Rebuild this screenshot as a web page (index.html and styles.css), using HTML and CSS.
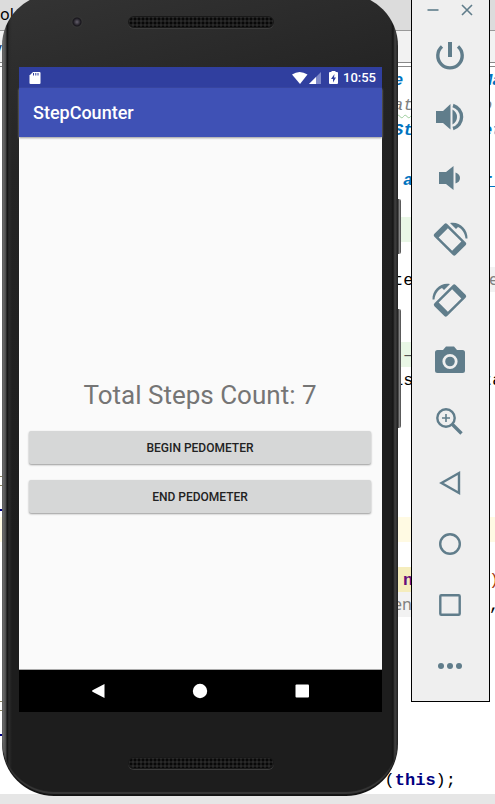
FILE: index.html
```html
<!DOCTYPE html>
<html lang="en">
<head>
<meta charset="utf-8">
<meta name="viewport" content="width=device-width, initial-scale=1">
<title>StepCounter</title>
<link rel="stylesheet" href="styles.css">
</head>
<body>
<div class="desktop">
  <div class="editor">
    <div class="tabs">ol</div>
    <div class="crumbs"><span class="crumb-text">v</span></div>
    <div class="code">
      <div class="line doc"><span class="mid">e</span><span class="end">Ma</span></div>
      <div class="line comment"><span class="mid wavy">at</span><span class="end">o:</span></div>
      <div class="line doc"><span class="mid">St</span><span class="end">et</span></div>
      <div class="line"></div>
      <div class="line doc"><span class="mid shift">a</span><span class="end under">r_</span></div>
      <div class="line"></div>
      <div class="line"><span class="mid green"></span></div>
      <div class="line"></div>
      <div class="line"><span class="mid">te</span><span class="end edge hint">e</span></div>
      <div class="line"></div>
      <div class="line"></div>
      <div class="line"><span class="mid green shift">–</span></div>
      <div class="line"><span class="mid">is</span><span class="end">ta</span></div>
      <div class="line"></div>
      <div class="line"></div>
      <div class="line"></div>
      <div class="line gutter"></div>
      <div class="line rule"></div>
      <div class="line current"></div>
      <div class="line"></div>
      <div class="line field"><span class="mid match">n</span><span class="end edge close">)</span></div>
      <div class="line"><span class="mid hint">en</span><span class="end edge">,</span></div>
      <div class="line"></div>
      <div class="line"></div>
      <div class="line"></div>
      <div class="line gutter"></div>
      <div class="line rule"></div>
      <div class="line"></div>
      <div class="line call"><span>(<b>this</b>);</span></div>
    </div>
    <div class="footer"></div>
  </div>

  <div class="windows">
    <main class="phone">
      <div class="side-key power-key"></div>
      <div class="side-key volume-key"></div>
      <div class="bezel top">
        <span class="lens"></span>
        <span class="speaker"></span>
      </div>
      <div class="screen">
        <div class="status">
          <svg width="12" height="14" viewBox="0 0 12 14"><path d="M4 1h6.500a1 1 0 0 1 1 1v10a1 1 0 0 1-1 1H1.500a1 1 0 0 1-1-1V4.500z" fill="#fff"/><path d="M4.500 2v2.500M6.800 2v2.500M9 2v2.500" stroke="#303f9f"/></svg>
          <div class="status-right">
            <svg width="32" height="14" viewBox="0 0 32 14"><path d="M0 3.500Q7.500-1.500 15.500 3.500L8 13z" fill="#fff"/><path d="M29 1v12H17z" fill="#7e88c8"/><path d="M24 6v7h-7z" fill="#fff"/></svg>
            <svg width="9" height="14" viewBox="0 0 9 14"><path d="M2.500 1V0h4v1H8a1 1 0 0 1 1 1v10a1 1 0 0 1-1 1H1a1 1 0 0 1-1-1V2a1 1 0 0 1 1-1z" fill="#fff"/><path d="M5.500 3L2 8h2v3.500L7 6.500H5z" fill="#303f9f"/></svg>
            <span class="time">10:55</span>
          </div>
        </div>
        <header class="appbar"><h1>StepCounter</h1></header>
        <section class="content">
          <p class="count">Total Steps Count: 7</p>
          <button class="action">BEGIN PEDOMETER</button>
          <button class="action">END PEDOMETER</button>
        </section>
        <nav class="nav">
          <button aria-label="Back"><svg width="16" height="16" viewBox="0 0 16 16"><path d="M14.500 1v14L2.500 8.700q-1-.7 0-1.400z" fill="#fff"/></svg></button>
          <button aria-label="Home"><svg width="16" height="16" viewBox="0 0 16 16"><circle cx="8" cy="8" r="7.200" fill="#fff"/></svg></button>
          <button aria-label="Recents"><svg width="16" height="16" viewBox="0 0 16 16"><rect x="1.500" y="1.500" width="13.500" height="13" rx="1" fill="#fff"/></svg></button>
        </nav>
      </div>
      <div class="bezel bottom"><span class="speaker"></span></div>
    </main>

    <aside class="tools">
      <div class="window-bar">
        <button aria-label="Minimize"><svg width="12" height="12" viewBox="0 0 12 12"><path d="M.5 6h11" class="thin"/></svg></button>
        <button aria-label="Close"><svg width="12" height="12" viewBox="0 0 12 12"><path d="M1 1l10 10M11 1L1 11" class="thin"/></svg></button>
      </div>
      <button class="tool" aria-label="Power"><svg viewBox="0 0 36 36"><path d="M10 8.500a12.200 12.200 0 1 0 16 0" class="line-3"/><path d="M16 4h4v15h-4z"/></svg></button>
      <button class="tool" aria-label="Volume up"><svg viewBox="0 0 36 36"><path d="M4 12h7l7.500-7v25.500L11 24H4zM20.500 10.500q4.500 2.500 4.500 7.500t-4.500 7.500z"/><path d="M21 6.500a12 12 0 0 1 0 23" class="line-3"/></svg></button>
      <button class="tool" aria-label="Volume down"><svg viewBox="0 0 36 36"><path d="M7 12h7l7.500-6v24L14 24H7zM23.500 12.500q4.500 1.500 4.500 5.500t-4.500 5.500z"/></svg></button>
      <button class="tool" aria-label="Rotate left"><svg viewBox="0 0 36 36"><path transform="translate(18 18.500) rotate(45)" fill-rule="evenodd" d="M-13-9h26a2 2 0 0 1 2 2V7a2 2 0 0 1-2 2h-26a2 2 0 0 1-2-2V-7a2 2 0 0 1 2-2zM-9.500-6.500v13H9.500v-13z"/><path d="M18 2C27 0 36 8 35.500 17.500h-2C33 12 30 8 26 6l-2 2z"/></svg></button>
      <button class="tool" aria-label="Rotate right"><svg viewBox="0 0 36 36"><g transform="translate(36 0) scale(-1 1)"><path transform="translate(18 18.500) rotate(45)" fill-rule="evenodd" d="M-13-9h26a2 2 0 0 1 2 2V7a2 2 0 0 1-2 2h-26a2 2 0 0 1-2-2V-7a2 2 0 0 1 2-2zM-9.500-6.500v13H9.500v-13z"/><path d="M18 2C27 0 36 8 35.500 17.500h-2C33 12 30 8 26 6l-2 2z"/></g></svg></button>
      <button class="tool" aria-label="Take screenshot"><svg viewBox="0 0 36 36"><path d="M5.500 7H11l3-3.500h8L25 7h5.500A2.500 2.500 0 0 1 33 9.500v18a2.500 2.500 0 0 1-2.500 2.500h-25A2.500 2.500 0 0 1 3 27.500v-18A2.500 2.500 0 0 1 5.500 7z"/><circle cx="18" cy="18.500" r="6.200" class="lens-ring"/></svg></button>
      <button class="tool" aria-label="Zoom"><svg viewBox="0 0 36 36"><circle cx="14" cy="14" r="8.700" class="line-2"/><path d="M20.500 20.500l9 9" class="line-3"/><path d="M14 10v8M10 14h8" class="thin"/></svg></button>
      <button class="tool" aria-label="Back"><svg viewBox="0 0 36 36"><path d="M27 8v20L9.500 18z" class="line-2"/></svg></button>
      <button class="tool" aria-label="Home"><svg viewBox="0 0 36 36"><circle cx="18" cy="18" r="9.800" class="line-2"/></svg></button>
      <button class="tool" aria-label="Overview"><svg viewBox="0 0 36 36"><rect x="8.300" y="8.300" width="19.400" height="19.400" rx="1" class="line-2"/></svg></button>
      <button class="tool" aria-label="More"><svg viewBox="0 0 36 36"><circle cx="9" cy="18" r="3"/><circle cx="18" cy="18" r="3"/><circle cx="27" cy="18" r="3"/></svg></button>
    </aside>
  </div>
</div>
</body>
</html>
```
FILE: styles.css
```css
* { box-sizing: border-box; }

body {
  margin: 0;
  background: #fff;
  font-family: Roboto, "Liberation Sans", sans-serif;
}

h1, p { margin: 0; }

button {
  border: 0;
  padding: 0;
  background: none;
  font-family: inherit;
}

svg { display: block; }

/* The editor and the emulator windows share one grid cell, stacked. */
.desktop {
  display: grid;
  min-height: 100vh;
  overflow: hidden;
}

.editor, .windows {
  grid-area: 1 / 1;
  min-width: 0;
}

/* Editor behind the emulator */
.editor {
  display: flex;
  flex-direction: column;
}

.tabs {
  height: 31px;
  border-bottom: 1px solid #999;
  background: #dcdcdc;
  font: 16px/28px "Noto Sans", sans-serif;
}

.crumbs {
  height: 36px;
  border-bottom: 1px solid #888;
  background: linear-gradient(#f2f2f2 31px, #888 31px, #888 32px, #fff 32px);
  line-height: 36px;
}

.crumb-text {
  display: block;
  width: 2px;
  direction: rtl;
  color: #123a66;
}

.code {
  flex: 1;
  font: 17px/28px "Liberation Mono", monospace;
}

.line {
  display: grid;
  grid-template-columns: 1fr 18px 79px 5px;
  grid-template-rows: 25px;
  height: 25px;
}

.mid {
  grid-column: 2;
  white-space: nowrap;
}

.end {
  grid-column: 3 / 5;
  padding-left: 71px;
  white-space: nowrap;
}

.edge { padding-left: 78px; }
.shift { padding-left: 10px; }
.doc { color: #0073bf; font-weight: bold; font-style: italic; }
.comment { color: #808080; font-style: italic; }
.wavy { text-decoration: underline wavy #9ccc9c 1px; text-underline-offset: 4px; }
.under { text-decoration: underline; }
.green { background: #e9f7e6; color: #555; }
.hint { background: #f2f2f2; color: #808080; font-family: "Noto Sans", sans-serif; font-size: 16px; line-height: 25px; }
.current { background: #fffae3; }
.field { color: #660e7a; font-weight: bold; }
.match { padding-left: 10px; background: #f5edbd; }
.close { color: #a63c14; font-weight: normal; }

/* Fold marks and separators in the narrow strip at the left edge */
.gutter {
  background: linear-gradient(transparent 9px, #8a8460 9px, #8a8460 10px, transparent 10px, transparent 18px, #8a8460 18px, #8a8460 19px, transparent 19px) 0 0 / 4px 25px no-repeat;
}

.rule {
  background: linear-gradient(transparent 17px, #000080 17px, #000080 19px, transparent 19px) 0 0 / 4px 25px no-repeat;
}

.call {
  display: block;
  padding-right: 39px;
  text-align: right;
}

.call b { color: #000080; }

.footer {
  height: 10px;
  background: #e6e6e6;
}

/* Emulator */
.windows {
  position: relative;
  display: flex;
  align-items: flex-start;
  gap: 13px;
  padding: 0 5px 0 2px;
}

.phone {
  position: relative;
  flex: 1;
  margin-top: -6px;
  padding: 6px 16px 0 17px;
  border-radius: 52px;
  background: linear-gradient(90deg, #777 0, #484848 4px, #111 5px, #2b2b2b 7px, transparent 10px, transparent calc(100% - 7px), #151515 calc(100% - 5px), #414141 calc(100% - 3px), #222 100%), linear-gradient(165deg, #343434 0, #242424 20%, #1d1d1d 60%);
  box-shadow: inset 0 -2px 1px #111, inset 0 -4px 1px #3a3a3a;
}

.side-key {
  position: absolute;
  left: 100%;
  width: 3px;
  border-radius: 0 2px 2px 0;
  background: linear-gradient(90deg, #333, #888, #444);
}

.power-key { top: 205px; height: 55px; }
.volume-key { top: 315px; height: 119px; }

.bezel {
  display: grid;
  grid-template-columns: 1fr 146px 1fr;
}

.top { height: 67px; padding-top: 16px; }
.bottom { height: 84px; padding-top: 45px; }

.speaker {
  grid-column: 2;
  height: 12px;
  border: 1px solid #191919;
  border-radius: 6px;
  background: radial-gradient(circle, #080808 1px, #292929 2px) 0 0 / 4px 4px;
  box-shadow: 0 1px 0 #3c3c3c;
}

.lens {
  justify-self: center;
  width: 12px;
  height: 12px;
  margin-left: 8px;
  border-radius: 50%;
  background: radial-gradient(circle, #65606d 0, #17151b 4px, #333 5px);
}

.screen {
  display: flex;
  flex-direction: column;
  height: 645px;
  background: #fafafa;
}

.status {
  display: flex;
  align-items: center;
  justify-content: space-between;
  height: 21px;
  padding: 0 6px 0 10px;
  background: #303f9f;
}

.status-right {
  display: flex;
  align-items: center;
  gap: 5px;
}

.time {
  color: #fff;
  font-size: 13px;
  font-weight: 500;
}

.appbar {
  display: flex;
  align-items: center;
  height: 49px;
  padding: 0 14px;
  background: #3f51b5;
  box-shadow: 0 1px 2px #999;
}

.appbar h1 {
  color: #fff;
  font-size: 18px;
  font-weight: 500;
}

.content {
  display: flex;
  flex: 1;
  flex-direction: column;
  gap: 16px;
  padding: 238px 11px 0 10px;
  border-bottom: 1px solid #aaa;
}

.count {
  color: #757575;
  font-size: 26px;
  line-height: 40px;
  text-align: center;
}

.action {
  height: 33px;
  border-radius: 2px;
  background: #d6d7d7;
  box-shadow: 0 1px 2px #999;
  color: #222;
  font-size: 12px;
  font-weight: 500;
}

.nav {
  display: flex;
  align-items: center;
  justify-content: center;
  gap: 86px;
  height: 42px;
  padding-right: 1px;
  background: #000;
}

/* Emulator toolbar */
.tools {
  display: flex;
  flex-direction: column;
  width: 79px;
  padding-bottom: 5px;
  border: 1px solid #000;
  border-top: 0;
  background: #efefef;
}

.window-bar {
  display: flex;
  justify-content: center;
  gap: 22px;
  height: 25px;
  padding: 4px 1px 0 0;
}

.window-bar button { height: 12px; }

.tool {
  display: grid;
  place-items: center;
  height: 61px;
  padding-right: 1px;
}

.tool svg {
  width: 36px;
  height: 36px;
  fill: #607d8b;
}

.thin, .tool .thin { fill: none; stroke: #607d8b; stroke-width: 1.6; }
.tool .line-2 { fill: none; stroke: #607d8b; stroke-width: 2.4; }
.tool .line-3 { fill: none; stroke: #607d8b; stroke-width: 3.4; }
.tool .lens-ring { fill: none; stroke: #efefef; stroke-width: 2.8; }
```
